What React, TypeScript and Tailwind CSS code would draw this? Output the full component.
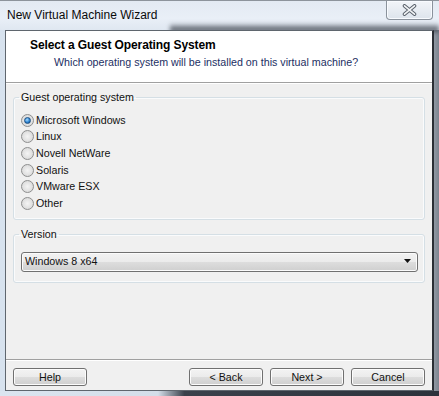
import React from "react";

const OPTIONS = ["Microsoft Windows", "Linux", "Novell NetWare", "Solaris", "VMware ESX", "Other"];

function Radio({ checked }: { checked?: boolean }) {
  return (
    <span className="flex h-[13px] w-[13px] shrink-0 items-center justify-center rounded-full border border-[#8e8f8f] bg-[radial-gradient(circle_at_50%_50%,#f4f4f4_0%,#e2e2e2_55%,#cfcfcf_100%)]">
      {checked && (
        <span className="h-[7px] w-[7px] rounded-full border border-[#1d4f82] bg-[radial-gradient(circle_at_40%_35%,#a8dcff_0%,#2f86d4_55%,#0d4580_100%)]" />
      )}
    </span>
  );
}

function Button({ children }: { children: React.ReactNode }) {
  return (
    <button className="flex h-[18px] w-[74px] items-center justify-center rounded-[3px] border border-[#707070] bg-[linear-gradient(#f3f3f3_0%,#ebebeb_50%,#dddddd_51%,#cfcfcf_100%)] text-[10.7px] text-[#111] shadow-[inset_0_0_0_1px_#fcfcfc]">
      {children}
    </button>
  );
}

function CloseButton() {
  return (
    <div className="mr-[6px] flex h-[19px] w-[47px] shrink-0 items-center justify-center self-start rounded-b-[4px] border border-t-0 border-[#8a929c] bg-[linear-gradient(#f2f5f9,#dde4ec)] shadow-[inset_0_0_0_1px_#f8fbff]">
      <svg width="15" height="12" viewBox="0 0 15 12">
        <path d="M2.5 1.8 L12.5 10.2 M12.5 1.8 L2.5 10.2" stroke="#5b636d" strokeWidth="3.6" strokeLinecap="round" />
        <path d="M2.5 1.8 L12.5 10.2 M12.5 1.8 L2.5 10.2" stroke="#f4f6f8" strokeWidth="1.6" strokeLinecap="round" />
      </svg>
    </div>
  );
}

export default function App() {
  return (
    <div
      className="relative flex h-[396px] w-[439px] flex-col overflow-hidden bg-[linear-gradient(90deg,#d7e2ee_0%,#dfe8f2_40%,#e8eef6_70%,#aeb6bf_97%,#7d8590_100%)] text-[#111]"
      style={{ fontFamily: '"Liberation Sans", Arial, sans-serif' }}
    >
      {/* title bar */}
      <div className="relative flex h-[30px] shrink-0 items-start border-t border-[#8d949c] bg-[linear-gradient(180deg,#e3eaf3_0%,#e9eff7_60%,#dfe7f1_100%)]">
        <div className="pointer-events-none absolute bottom-[-2px] left-[170px] h-[9px] w-[269px] bg-[linear-gradient(180deg,rgba(90,96,106,0)_0%,rgba(70,76,86,0.75)_60%,rgba(60,66,76,0.9)_100%)] blur-[2px]" />
        <span className="relative ml-[7px] mt-[7px] text-[12px] leading-[15px] text-[#0a0a0a]">New Virtual Machine Wizard</span>
        <div className="relative ml-auto self-start">
          <CloseButton />
        </div>
      </div>

      {/* client area */}
      <div className="relative ml-[5px] flex h-[361px] w-[429px] shrink-0 flex-col border-l border-t border-r-2 border-b border-[#5f666e] border-r-[#2a2e34] bg-[#f0f0f0]">
        <div className="flex h-[51px] shrink-0 flex-col bg-white pt-[7px]">
          <span className="pl-[24px] text-[12px] font-bold leading-[14px] tracking-[-0.1px] text-black">
            Select a Guest Operating System
          </span>
          <span className="mt-[3px] pl-[48px] text-[10.7px] leading-[14px] text-[#1c2f63]">
            Which operating system will be installed on this virtual machine?
          </span>
        </div>
        <div className="h-px shrink-0 bg-[#a0a0a0]" />
        <div className="h-px shrink-0 bg-white" />

        <div className="flex flex-1 flex-col px-[7px] pt-[7px]">
          <fieldset className="rounded-[3px] border border-[#d5dfe5] pb-[7px] pl-[7px] pr-[6px] shadow-[inset_0_0_0_1px_#fafbfc]">
            <legend className="-ml-[2px] px-[2px] text-[10.7px] leading-[13px] text-[#111]">Guest operating system</legend>
            <div className="mt-[8px] flex flex-col">
              {OPTIONS.map((o, i) => (
                <div key={o} className="flex h-[16.6px] items-center gap-[2px]">
                  <Radio checked={i === 0} />
                  <span className="text-[10.7px] leading-[13px]">{o}</span>
                </div>
              ))}
            </div>
          </fieldset>

          <fieldset className="mt-[8px] rounded-[3px] border border-[#d5dfe5] pb-[10px] pl-[7px] pr-[6px] shadow-[inset_0_0_0_1px_#fafbfc]">
            <legend className="-ml-[2px] px-[2px] text-[10.7px] leading-[13px] text-[#111]">Version</legend>
            <div className="mt-[11px] flex h-[20px] items-center justify-between rounded-[3px] border border-[#707070] bg-[linear-gradient(#f2f2f2_0%,#ebebeb_50%,#dddddd_51%,#cfcfcf_100%)] pl-[3px] pr-[5px] shadow-[inset_0_0_0_1px_#fbfbfb]">
              <span className="text-[10.7px] leading-[13px]">Windows 8 x64</span>
              <svg width="8" height="5" viewBox="0 0 8 5">
                <path d="M0 0 H7 L3.5 4 Z" fill="#111" />
              </svg>
            </div>
          </fieldset>
        </div>

        <div className="h-px shrink-0 bg-[#a0a0a0]" />
        <div className="h-px shrink-0 bg-white" />
        <div className="flex h-[29px] shrink-0 items-start px-[7px] pt-[7px]">
          <Button>Help</Button>
          <div className="ml-auto flex gap-[7px]">
            <Button>&lt; Back</Button>
            <Button>Next &gt;</Button>
            <Button>Cancel</Button>
          </div>
        </div>
      </div>

      {/* bottom frame */}
      <div className="flex-1 bg-[linear-gradient(90deg,#dbe5f0_0%,#d4dee9_36%,#3a414b_42%,#2c323b_100%)]" />
    </div>
  );
}
